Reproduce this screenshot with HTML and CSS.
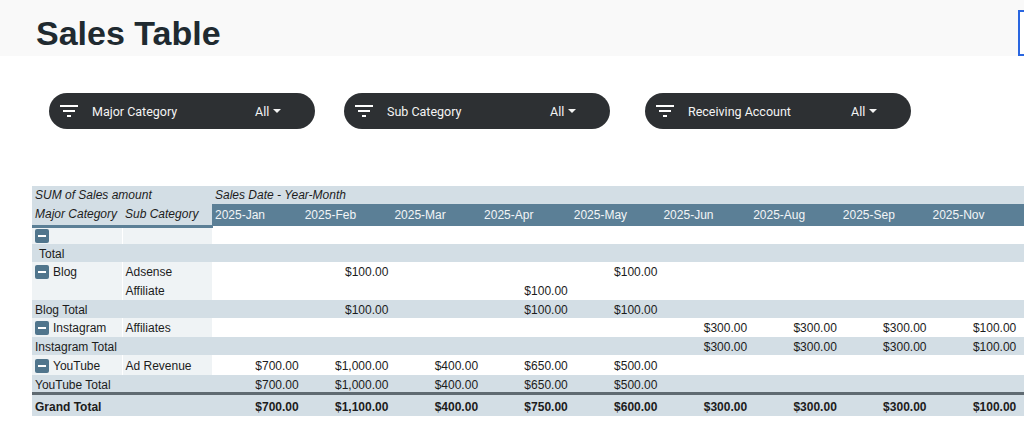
FILE: index.html
```html
<!DOCTYPE html>
<html lang="en">
<head>
    <title>Sales Table</title>
    <meta charset="UTF-8">
    <link rel="stylesheet" href="styles.css">
</head>
<body>
    <header class="top">
        <h1>Sales Table</h1>
        <div class="selected-box"></div>
    </header>

    <div class="filters">
        <div class="pill">
            <svg class="funnel" viewBox="0 0 18 12" width="18" height="12"><path d="M0 0h18v2H0zM3 5h12v2H3zM7 10h4v2H7z"/></svg>
            <span class="pill-name">Major Category</span>
            <span class="pill-value">All</span><span class="caret"></span>
        </div>
        <div class="pill">
            <svg class="funnel" viewBox="0 0 18 12" width="18" height="12"><path d="M0 0h18v2H0zM3 5h12v2H3zM7 10h4v2H7z"/></svg>
            <span class="pill-name">Sub Category</span>
            <span class="pill-value">All</span><span class="caret"></span>
        </div>
        <div class="pill pill-last">
            <svg class="funnel" viewBox="0 0 18 12" width="18" height="12"><path d="M0 0h18v2H0zM3 5h12v2H3zM7 10h4v2H7z"/></svg>
            <span class="pill-name">Receiving Account</span>
            <span class="pill-value">All</span><span class="caret"></span>
        </div>
    </div>

    <div class="table-wrap">
        <table class="pivot">
            <colgroup>
                <col class="c-major"><col class="c-sub">
                <col class="c-m"><col class="c-m"><col class="c-m"><col class="c-m"><col class="c-m"><col class="c-m"><col class="c-m"><col class="c-m"><col class="c-last">
            </colgroup>
            <tr class="head1">
                <th colspan="2">SUM of Sales amount</th>
                <th colspan="9">Sales Date - Year-Month</th>
            </tr>
            <tr class="head2">
                <th class="label">Major Category</th>
                <th class="label">Sub Category</th>
                <th>2025-Jan</th><th>2025-Feb</th><th>2025-Mar</th><th>2025-Apr</th><th>2025-May</th><th>2025-Jun</th><th>2025-Aug</th><th>2025-Sep</th><th>2025-Nov</th>
            </tr>
            <tr class="h18">
                <td class="side"><span class="toggle"></span></td>
                <td class="side"></td>
                <td colspan="9"></td>
            </tr>
            <tr class="total h18">
                <td colspan="2" class="indent">Total</td>
                <td colspan="9"></td>
            </tr>
            <tr class="h19">
                <td class="side" rowspan="2"><span class="toggle"></span>Blog</td>
                <td class="side">Adsense</td>
                <td></td><td>$100.00</td><td></td><td></td><td>$100.00</td><td></td><td></td><td></td><td></td>
            </tr>
            <tr class="h19">
                <td class="side">Affiliate</td>
                <td></td><td></td><td></td><td>$100.00</td><td></td><td></td><td></td><td></td><td></td>
            </tr>
            <tr class="total h18">
                <td colspan="2">Blog Total</td>
                <td></td><td>$100.00</td><td></td><td>$100.00</td><td>$100.00</td><td></td><td></td><td></td><td></td>
            </tr>
            <tr class="h19">
                <td class="side"><span class="toggle"></span>Instagram</td>
                <td class="side">Affiliates</td>
                <td></td><td></td><td></td><td></td><td></td><td>$300.00</td><td>$300.00</td><td>$300.00</td><td>$100.00</td>
            </tr>
            <tr class="total h18">
                <td colspan="2">Instagram Total</td>
                <td></td><td></td><td></td><td></td><td></td><td>$300.00</td><td>$300.00</td><td>$300.00</td><td>$100.00</td>
            </tr>
            <tr class="h20">
                <td class="side"><span class="toggle"></span>YouTube</td>
                <td class="side">Ad Revenue</td>
                <td>$700.00</td><td>$1,000.00</td><td>$400.00</td><td>$650.00</td><td>$500.00</td><td></td><td></td><td></td><td></td>
            </tr>
            <tr class="total h17">
                <td colspan="2">YouTube Total</td>
                <td>$700.00</td><td>$1,000.00</td><td>$400.00</td><td>$650.00</td><td>$500.00</td><td></td><td></td><td></td><td></td>
            </tr>
            <tr class="total grand">
                <td colspan="2">Grand Total</td>
                <td>$700.00</td><td>$1,100.00</td><td>$400.00</td><td>$750.00</td><td>$600.00</td><td>$300.00</td><td>$300.00</td><td>$300.00</td><td>$100.00</td>
            </tr>
        </table>
    </div>
</body>
</html>
```

FILE: styles.css
```css
html, body {
    overflow: hidden;
}
body {
    margin: 0;
    font-family: "Liberation Sans", Arial, sans-serif;
    background-color: #fff;
}

/****** TITLE ******/
.top {
    position: relative;
    height: 56px;
    background-color: #f9f9f9;
}
.top h1 {
    margin: 0;
    padding: 11px 0 0 36px;
    font-size: 34px;
    line-height: 44px;
    font-weight: 700;
    color: #202a30;
}
.selected-box {
    position: absolute;
    left: 1018px;
    top: 10px;
    width: 20px;
    height: 42px;
    border: 2px solid #2a66e0;
    background-color: #fff;
}

/****** FILTERS ******/
.filters {
    display: flex;
    gap: 29px;
    padding: 37px 0 0 49px;
}
.pill {
    display: flex;
    align-items: center;
    box-sizing: border-box;
    width: 266px;
    height: 36px;
    padding-left: 11px;
    border-radius: 18px;
    background-color: #2d3033;
    color: #f4f4f4;
    font-family: Roboto, sans-serif;
    font-size: 12.5px;
}
.pill-last {
    margin-left: 6px;
}
.funnel {
    fill: #fff;
    flex: none;
    margin-right: 14px;
    margin-top: -1px;
}
.pill-name {
    width: 163px;
    flex: none;
}
.pill-value {
    margin-right: 4px;
}
.caret {
    width: 0;
    height: 0;
    border-left: 4px solid transparent;
    border-right: 4px solid transparent;
    border-top: 4px solid #f4f4f4;
}

/****** PIVOT TABLE ******/
.table-wrap {
    margin: 57px 0 0 32px;
    width: 992px;
    overflow: hidden;
}
.pivot {
    border-collapse: collapse;
    table-layout: fixed;
    width: 992.3px;
    font-size: 12px;
    color: #1c1c1c;
}
.c-major, .c-sub {
    width: 90px;
}
.c-m {
    width: 89.7px;
}
.c-last {
    width: 94.7px;
}
.pivot th, .pivot td {
    padding: 0 3px;
    box-sizing: border-box;
    font-weight: 400;
    white-space: nowrap;
    overflow: hidden;
}
.pivot td {
    padding-top: 1px;
    text-align: right;
}
.pivot td:last-child {
    padding-right: 8px;
}
.h17 td { height: 17px; }
.h18 td { height: 18px; }
.h19 td { height: 19px; }
.h20 td { height: 20px; }
.pivot .h17 td, .pivot .grand td {
    padding-top: 3px;
}
.head1 th {
    height: 18px;
    text-align: left;
    font-style: italic;
    background-color: #d3dee5;
}
.head2 th {
    height: 22px;
    text-align: left;
    color: #f2f5f7;
    background-color: #5b7f96;
}
.head2 th.label {
    font-style: italic;
    color: #1c1c1c;
    background-color: #d3dee5;
    border-bottom: 3px solid #5b7f96;
}
.pivot td.side {
    text-align: left;
    vertical-align: middle;
    background-color: #eff3f5;
    border-right: 1px solid #fff;
    padding-right: 3px;
}
.pivot td.side[rowspan] {
    vertical-align: top;
    padding-top: 3px;
}
.total td {
    background-color: #d3dee5;
}
.pivot .total td:first-child {
    text-align: left;
}
.pivot .total td.indent {
    padding-left: 7px;
}
.grand td {
    height: 22px;
    font-weight: 700;
    border-top: 3px solid #5f6a71;
}
.toggle {
    display: inline-block;
    position: relative;
    width: 14px;
    height: 14px;
    margin-right: 4px;
    vertical-align: -3px;
    border-radius: 2px;
    background-color: #50758c;
}
.toggle::after {
    content: "";
    position: absolute;
    left: 3px;
    top: 6px;
    width: 8px;
    height: 2px;
    background-color: #fff;
}
```
